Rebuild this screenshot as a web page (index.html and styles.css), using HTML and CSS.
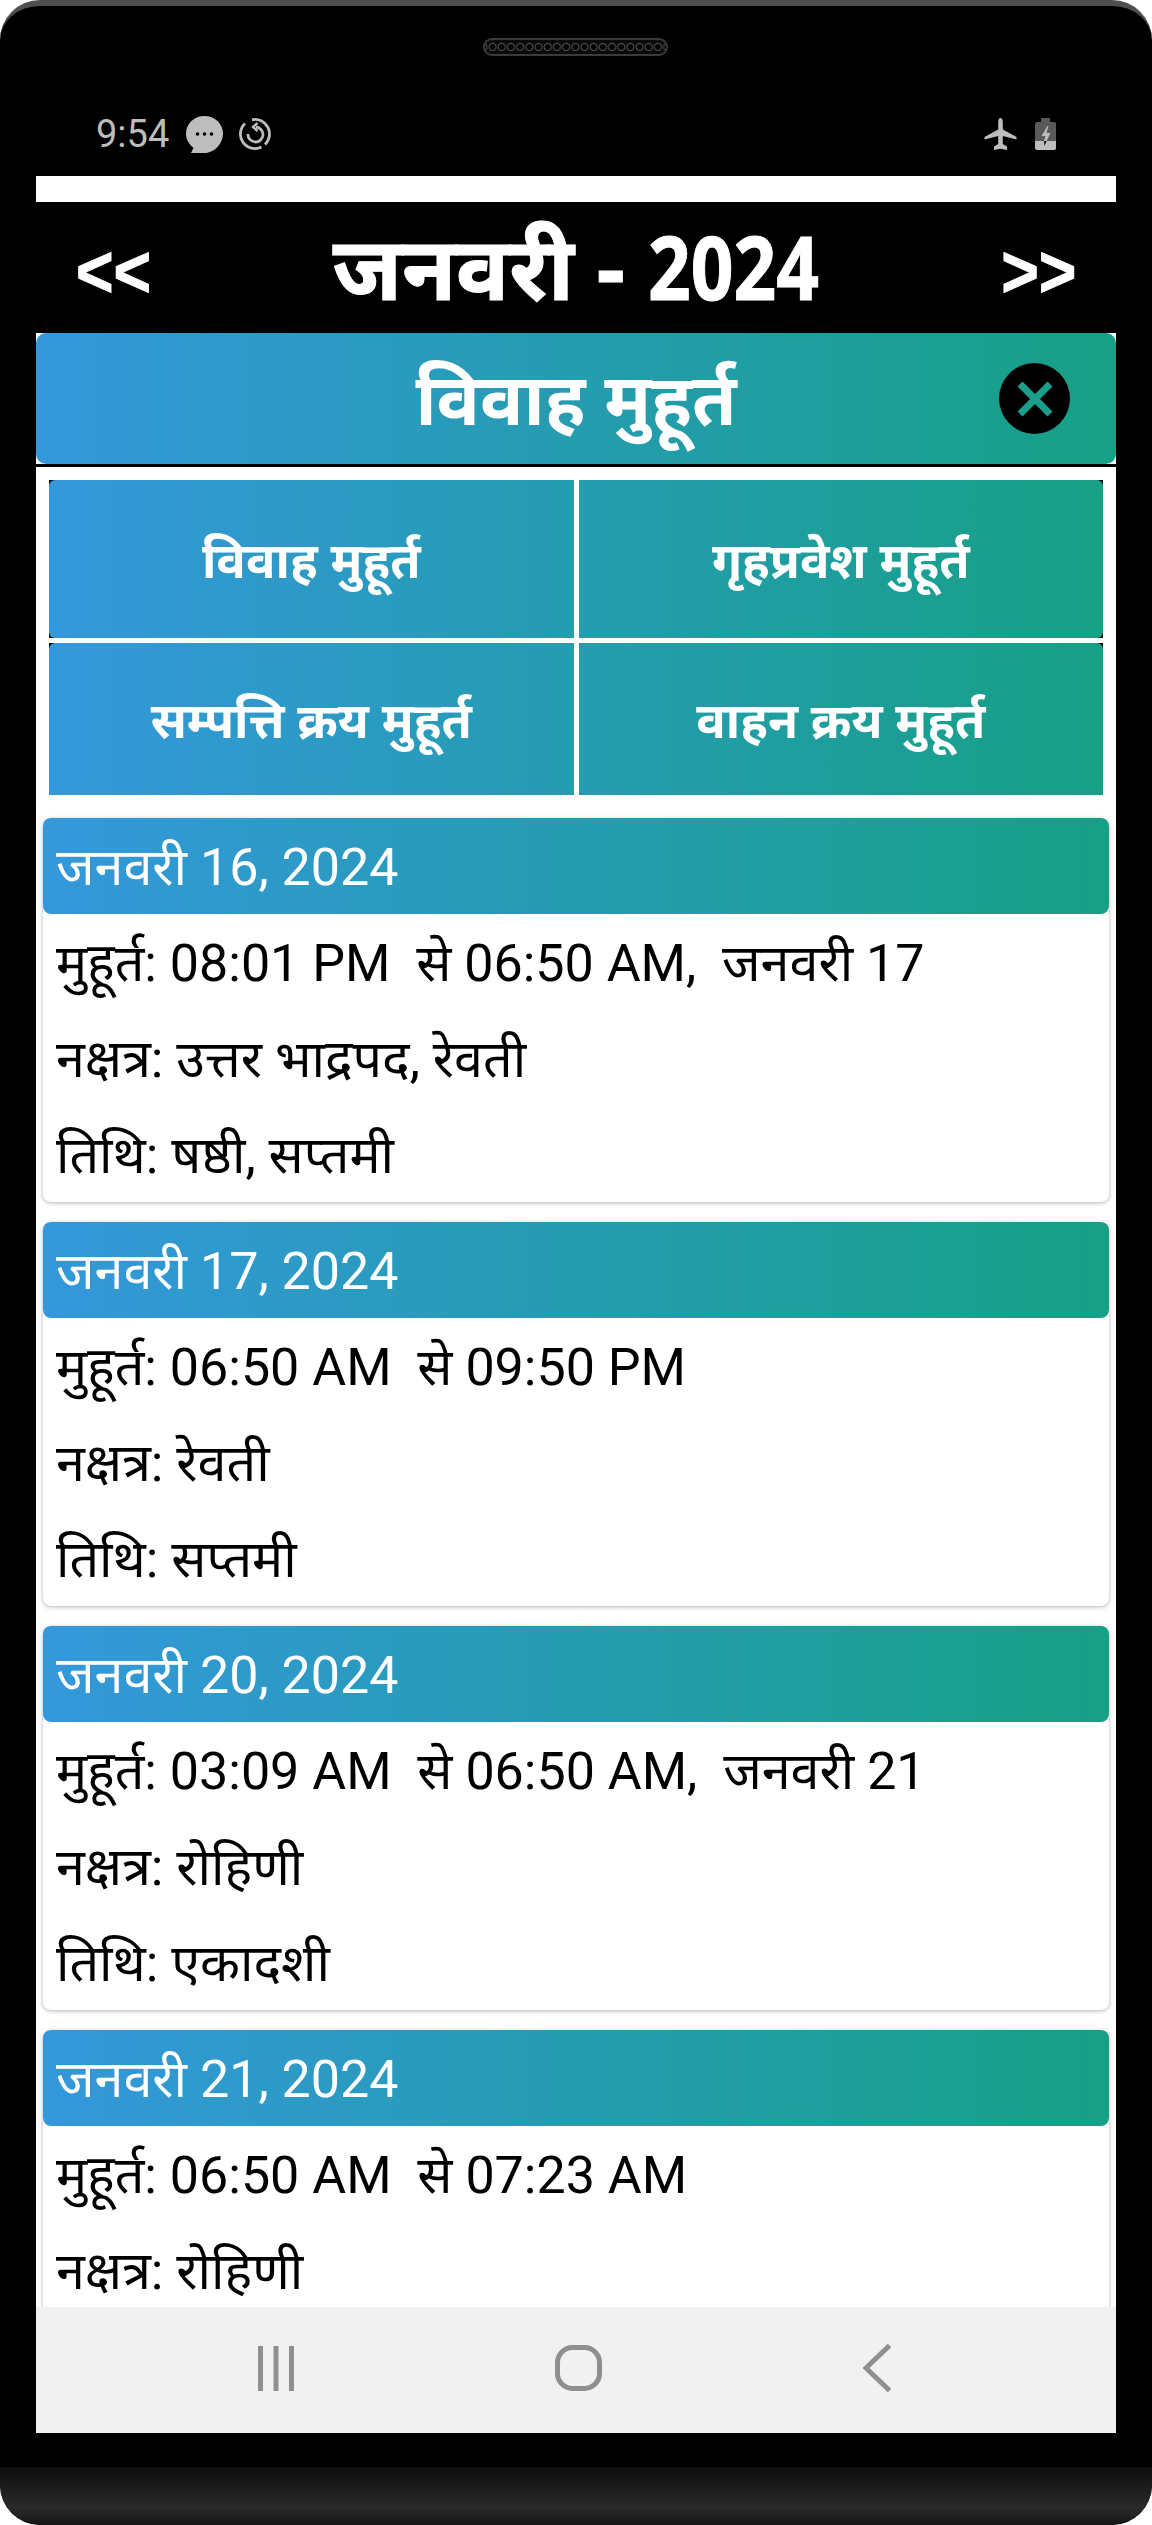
FILE: index.html
```html
<!DOCTYPE html>
<html lang="hi">

<head>
    <meta charset="UTF-8">
    <meta name="viewport" content="width=device-width, initial-scale=1.0">
    <title>विवाह मुहूर्त</title>
    <link rel="stylesheet" href="styles.css">
</head>

<body>
<div class="phone">
    <div class="speaker"></div>

    <div class="status">
        <div class="status-left">
            <span class="time">9:54</span>
            <svg class="icon-msg" viewBox="0 0 37 37">
                <path fill="#bdbdbd" d="M18.500 0C8.300 0 0 7.800 0 17.500c0 5.800 3 11 7.500 14.200L5 37h13.500C28.700 37 37 27.200 37 17.500 37 7.800 28.700 0 18.500 0z"/>
                <circle cx="11.500" cy="18" r="1.800"/>
                <circle cx="18.500" cy="18" r="1.800"/>
                <circle cx="25.500" cy="18" r="1.800"/>
            </svg>
            <svg class="icon-sync" viewBox="0 0 32 32" fill="none" stroke="#bdbdbd" stroke-width="2.800">
                <path d="M13 1.800A14.500 14.500 0 0 1 26 26.500"/>
                <path d="M22.500 29A14.500 14.500 0 0 1 6 5.500"/>
                <path d="M17 9a7.500 7.500 0 1 1-8 7"/>
                <path d="M18.500 5l-4.500 4 4.500 4" stroke-width="2.400"/>
            </svg>
        </div>
        <div class="status-right">
            <svg class="icon-plane" viewBox="0 0 33 32">
                <path fill="#bdbdbd" d="M16.500 0c-1.400 0-2.300 2-2.300 4v7.500L.5 19v2.500l13.700-3.500v8L10 28.500V32l6.500-1.300L23 32v-3.500L18.800 26v-8l13.700 3.500V19l-13.700-7.500V4c0-2-.900-4-2.300-4z"/>
            </svg>
            <svg class="icon-batt" viewBox="0 0 21 32">
                <path fill="#5a5a5a" d="M6 0h9v4h4a2 2 0 0 1 2 2v17H0V6a2 2 0 0 1 2-2h4z"/>
                <path fill="#bdbdbd" d="M0 23h21v7a2 2 0 0 1-2 2H2a2 2 0 0 1-2-2z"/>
                <path fill="#bdbdbd" d="M12.500 8L6.500 18h4L9 23h2.500l4-8h-4l2-7z"/>
                <path fill="#000" d="M9 23h2.500L9.500 28z"/>
            </svg>
        </div>
    </div>

    <div class="screen">
        <div class="top-strip"></div>

        <div class="month-bar">
            <span class="arrow arrow-prev">&lt;&lt;</span>
            <span class="month">जनवरी - <span class="month-year">2024</span></span>
            <span class="arrow arrow-next">&gt;&gt;</span>
        </div>

        <div class="page">
            <div class="title-bar">
                <h1>विवाह मुहूर्त</h1>
                <span class="close">
                    <svg viewBox="0 0 36 36" width="36" height="36">
                        <path d="M3 3l30 30M33 3L3 33" stroke="#1a9f8c" stroke-width="7"/>
                    </svg>
                </span>
            </div>

            <div class="content">
                <div class="tabs">
                    <div class="tab-cell"><a class="tab tab-left">विवाह मुहूर्त</a></div>
                    <div class="tab-cell"><a class="tab tab-right">गृहप्रवेश मुहूर्त</a></div>
                    <div class="tab-cell"><a class="tab tab-left tab-low">सम्पत्ति क्रय मुहूर्त</a></div>
                    <div class="tab-cell"><a class="tab tab-right tab-low">वाहन क्रय मुहूर्त</a></div>
                </div>

                <div class="cards">
                    <div class="card">
                        <div class="card-head">जनवरी 16, 2024</div>
                        <p>मुहूर्त: 08:01 PM &nbsp;से 06:50 AM, &nbsp;जनवरी 17</p>
                        <p>नक्षत्र: उत्तर भाद्रपद, रेवती</p>
                        <p>तिथि: षष्ठी, सप्तमी</p>
                    </div>
                    <div class="card">
                        <div class="card-head">जनवरी 17, 2024</div>
                        <p>मुहूर्त: 06:50 AM &nbsp;से 09:50 PM</p>
                        <p>नक्षत्र: रेवती</p>
                        <p>तिथि: सप्तमी</p>
                    </div>
                    <div class="card">
                        <div class="card-head">जनवरी 20, 2024</div>
                        <p>मुहूर्त: 03:09 AM &nbsp;से 06:50 AM, &nbsp;जनवरी 21</p>
                        <p>नक्षत्र: रोहिणी</p>
                        <p>तिथि: एकादशी</p>
                    </div>
                    <div class="card">
                        <div class="card-head">जनवरी 21, 2024</div>
                        <p>मुहूर्त: 06:50 AM &nbsp;से 07:23 AM</p>
                        <p>नक्षत्र: रोहिणी</p>
                    </div>
                </div>
            </div>
        </div>

        <div class="nav">
            <svg viewBox="0 0 36 45" width="36" height="45" fill="none" stroke="#8f8f8f" stroke-width="5">
                <path d="M2.500 0v45M18 0v45M33.500 0v45"/>
            </svg>
            <svg viewBox="0 0 47 46" width="47" height="46" fill="none" stroke="#8f8f8f" stroke-width="5">
                <rect x="2.500" y="2.500" width="42" height="41" rx="15"/>
            </svg>
            <svg viewBox="0 0 28 48" width="28" height="48" fill="none" stroke="#8f8f8f" stroke-width="5">
                <path d="M26.500 1.500L3 24l23.500 22.500"/>
            </svg>
        </div>
    </div>

    <div class="chin"></div>
</div>
</body>

</html>
```

FILE: styles.css
```css
* {
    padding: 0;
    margin: 0;
    box-sizing: border-box;
}

body {
    width: 1152px;
    height: 2525px;
    overflow: hidden;
    background-color: #fff;
    font-family: Roboto, "Noto Sans", "Noto Sans CJK SC", sans-serif;
}

.phone {
    position: relative;
    height: 2525px;
    background-color: #000;
    border-radius: 40px;
    border-top: 6px solid #4f4f4f;
    overflow: hidden;
}

.speaker {
    position: absolute;
    left: 483px;
    top: 32px;
    width: 185px;
    height: 18px;
    border-radius: 9px;
    border: 2px solid #3a3a3a;
    background: radial-gradient(circle, #000 2.5px, #555 3.5px, #0a0a0a 4.5px) 3px 0 / 9.2px 100%;
}

.status {
    display: flex;
    justify-content: space-between;
    align-items: center;
    height: 170px;
    padding: 108px 96px 22px 96px;
}

.status-left,
.status-right {
    display: flex;
    align-items: center;
}

.time {
    font-size: 38px;
    color: #bdbdbd;
}

.icon-msg {
    width: 37px;
    height: 37px;
    margin-left: 17px;
}

.icon-sync {
    width: 32px;
    height: 32px;
    margin-left: 16px;
}

.icon-plane {
    width: 33px;
    height: 32px;
}

.icon-batt {
    width: 21px;
    height: 32px;
    margin-left: 18px;
}

.screen {
    margin: 0 36px;
    height: 2257px;
    display: flex;
    flex-direction: column;
}

.top-strip {
    height: 26px;
    background-color: #fff;
    flex: none;
}

.month-bar {
    flex: none;
    height: 131px;
    display: flex;
    justify-content: space-between;
    align-items: center;
    padding: 8px 40px 0;
    color: #fff;
}

.arrow {
    font: bold 74px "Liberation Sans", sans-serif;
    -webkit-text-stroke: 1px #fff;
}

/* no condensed font installed, so squeeze it */
.arrow-prev {
    transform: scaleX(0.87);
    transform-origin: left;
}

.arrow-next {
    transform: scaleX(0.87);
    transform-origin: right;
}

.month {
    font: bold 88px "Noto Sans", sans-serif;
    margin-bottom: 12px;
    -webkit-text-stroke: 1px #fff;
}

.month-year {
    display: inline-block;
    margin-right: -30px;
    transform: scaleX(0.85);
    transform-origin: left;
}

.page {
    flex: 1;
    min-height: 0;
    overflow: hidden;
    display: flex;
    flex-direction: column;
    background-color: #fff;
}

.title-bar {
    flex: none;
    height: 131px;
    display: flex;
    justify-content: center;
    align-items: center;
    position: relative;
    background: linear-gradient(90deg, #3498db, #16a085);
    border-radius: 10px;
    color: #fff;
}

.title-bar h1 {
    font: bold 72px "Noto Sans", sans-serif;
    margin-bottom: 4px;
}

.close {
    position: absolute;
    right: 46px;
    top: 30px;
    width: 71px;
    height: 71px;
    border-radius: 50%;
    background-color: #000;
    display: flex;
    justify-content: center;
    align-items: center;
}

.content {
    flex: 1;
    min-height: 0;
    border-top: 3px solid #000;
    overflow: hidden;
}

.tabs {
    display: grid;
    grid-template-columns: 1fr 1fr;
    gap: 5px;
    margin: 13px 13px 0;
}

.tab-cell {
    background-color: #000;
}

.tab {
    height: 158px;
    display: flex;
    justify-content: center;
    align-items: center;
    background: linear-gradient(90deg, #3498db, #16a085);
    background-size: 200% 100%;
    color: #fff;
    font: bold 49px "Noto Sans", sans-serif;
}

.tab-left {
    border-radius: 6px 0 0 6px;
}

.tab-right {
    background-position: 100% 0;
    border-radius: 0 6px 6px 0;
}

.tab-low {
    height: 152px;
}

.tab-low.tab-left {
    border-radius: 6px 0 0 0;
}

.tab-low.tab-right {
    border-radius: 0 6px 0 0;
}

.cards {
    padding: 23px 7px 0;
}

.card {
    margin-bottom: 20px;
    background-color: #fff;
    border-radius: 8px;
    box-shadow: 0 1px 4px rgba(0, 0, 0, 0.3);
}

.card-head {
    height: 96px;
    line-height: 92px;
    padding: 4px 0 0 13px;
    border-radius: 8px;
    background: linear-gradient(90deg, #3498db, #16a085);
    color: #fff;
    font-size: 52px;
}

.card p {
    height: 96px;
    line-height: 92px;
    padding: 4px 0 0 13px;
    font-size: 52px;
    color: #000;
    white-space: nowrap;
}

.nav {
    flex: none;
    height: 126px;
    display: flex;
    background-color: #f1f1f1;
    justify-content: space-between;
    align-items: center;
    padding: 0 225px 4px 222px;
}

.chin {
    position: absolute;
    left: 0;
    right: 0;
    bottom: 0;
    height: 58px;
    background: linear-gradient(180deg, #0e0e0e, #2a2a2a 70%, #151515);
    border-radius: 0 0 40px 40px;
}
```
